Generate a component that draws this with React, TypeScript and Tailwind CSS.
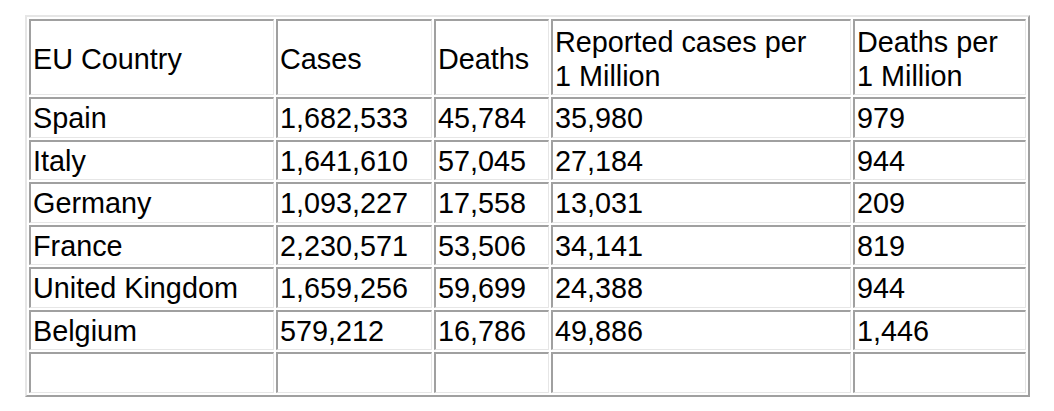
const rows = [
  ["Spain", "1,682,533", "45,784", "35,980", "979"],
  ["Italy", "1,641,610", "57,045", "27,184", "944"],
  ["Germany", "1,093,227", "17,558", "13,031", "209"],
  ["France", "2,230,571", "53,506", "34,141", "819"],
  ["United Kingdom", "1,659,256", "59,699", "24,388", "944"],
  ["Belgium", "579,212", "16,786", "49,886", "1,446"],
];

// inset look of an old-style border="1" table
const cell =
  "border-2 border-t-[#a0a0a0] border-l-[#a0a0a0] border-r-[#e6e6e6] border-b-[#e6e6e6] border-r-[1px] border-b-[1px] px-[2px] text-left font-normal align-middle";

const App = () => {
  return (
    <div
      className="min-h-screen bg-white text-black pl-[25px] pt-[15px]"
      style={{ fontFamily: '"Liberation Sans", Arial, sans-serif' }}
    >
      <table className="w-[1005px] table-fixed border-separate border-spacing-[2px] border-2 border-t-[#e6e6e6] border-l-[#e6e6e6] border-r-[#a0a0a0] border-b-[#a0a0a0] text-[28.8px] leading-[33.5px]">
        <thead>
          <tr>
            <th className={`${cell} w-[245px] pt-[5px] pb-[1px]`}>EU Country</th>
            <th className={`${cell} w-[156px] pt-[5px] pb-[1px]`}>Cases</th>
            <th className={`${cell} w-[115px] pt-[5px] pb-[1px]`}>Deaths</th>
            <th className={`${cell} w-[300px] pt-[5px] pb-[1px]`}>
              Reported cases per
              <br />1 Million
            </th>
            <th className={`${cell} w-[173px] pt-[5px] pb-[1px]`}>
              Deaths per
              <br />1 Million
            </th>
          </tr>
        </thead>
        <tbody>
          {rows.map((r) => (
            <tr key={r[0]}>
              {r.map((v, i) => (
                <td key={i} className={`${cell} pt-[3px] pb-[1px]`}>
                  {v}
                </td>
              ))}
            </tr>
          ))}
          <tr>
            {[0, 1, 2, 3, 4].map((i) => (
              <td key={i} className={`${cell} pt-[3px] pb-[1px]`}>
                &nbsp;
              </td>
            ))}
          </tr>
        </tbody>
      </table>
    </div>
  );
};

export default App;
